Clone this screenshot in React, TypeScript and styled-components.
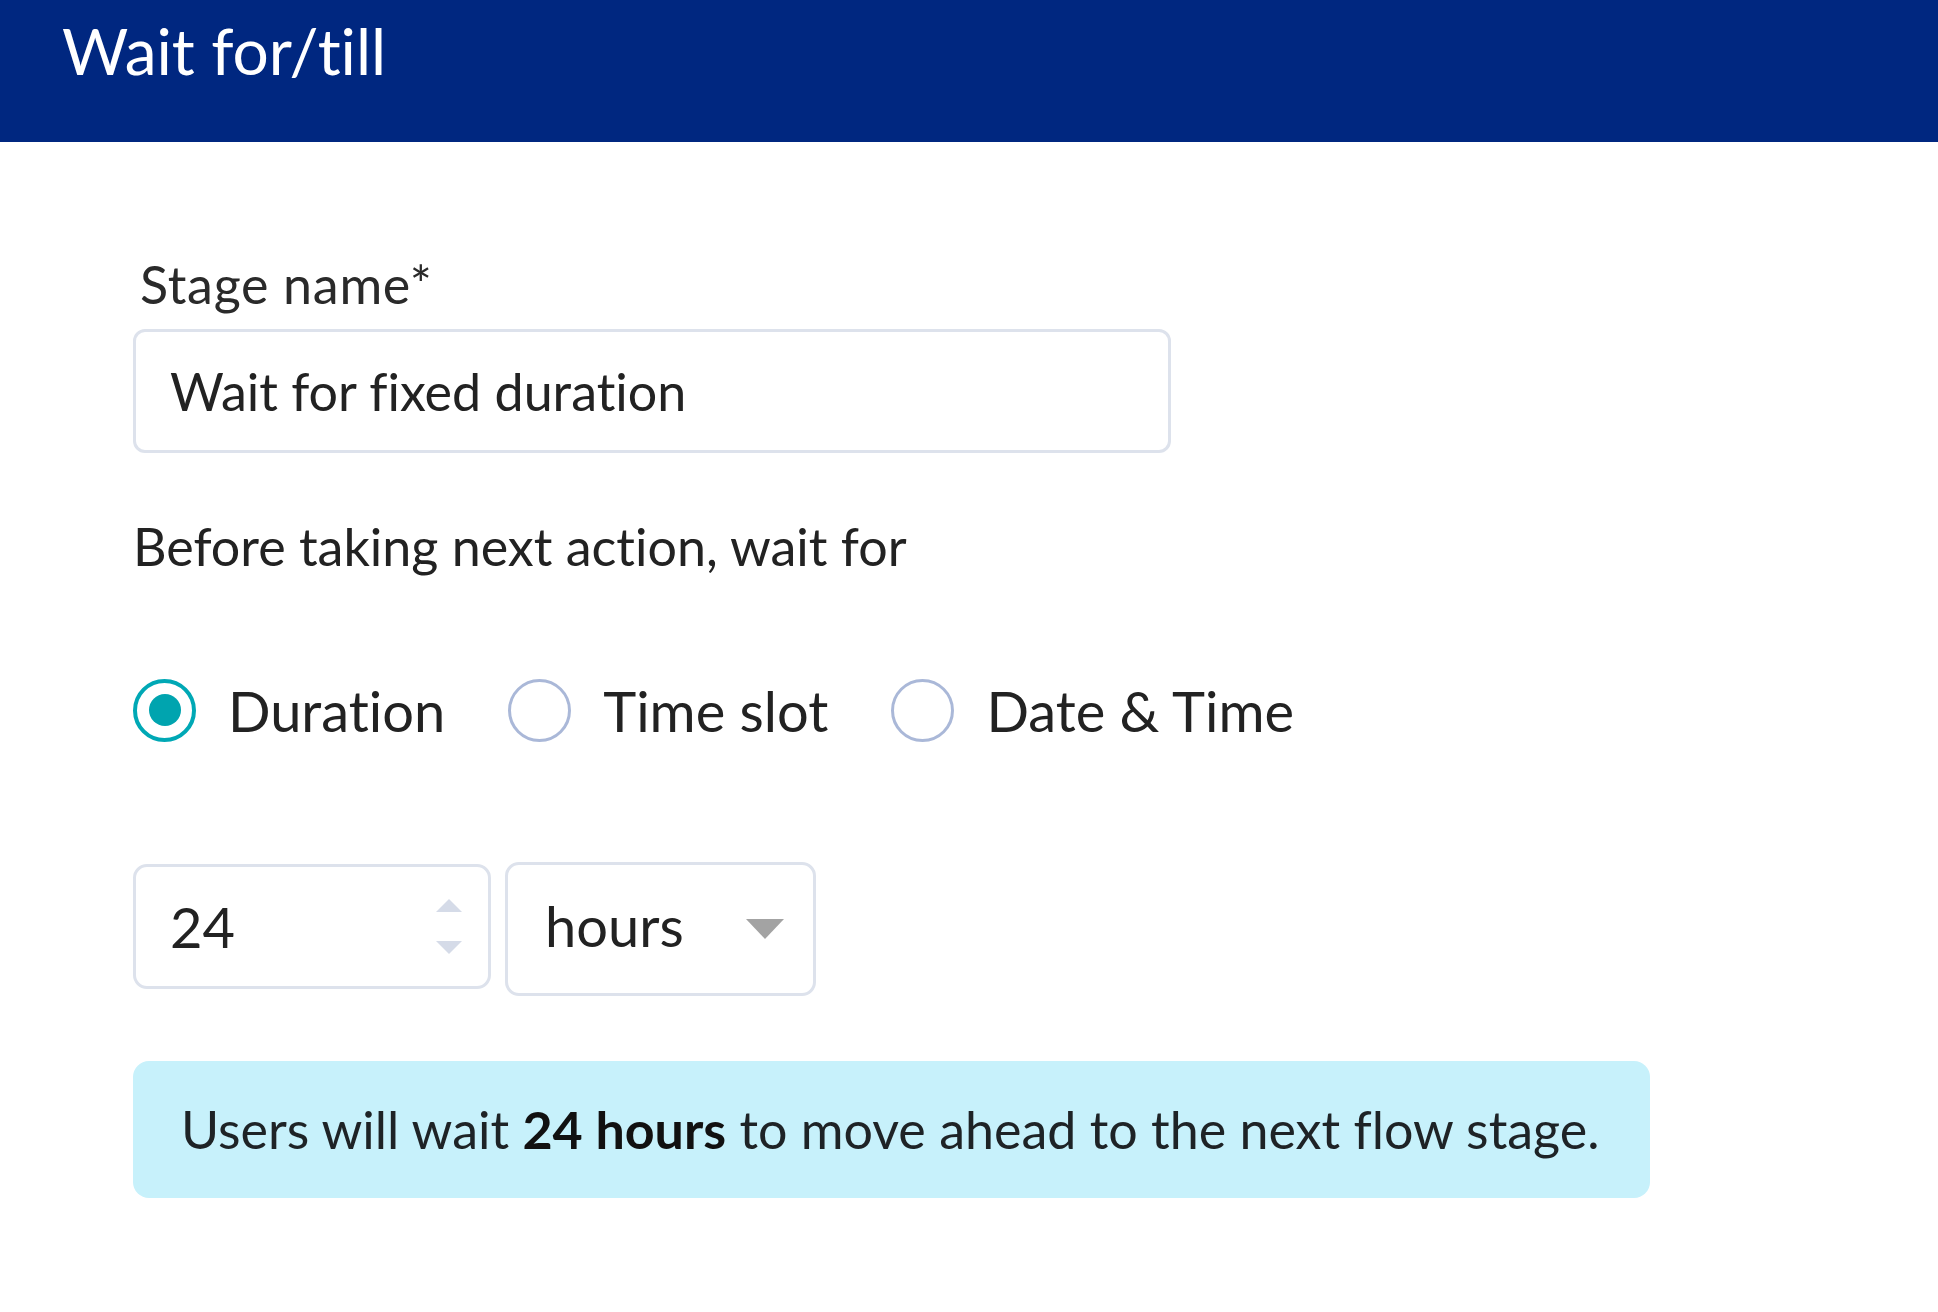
import React, { FC, useState } from "react";
import styled, { createGlobalStyle } from "styled-components";

const GlobalStyle = createGlobalStyle`
    html, body {
        margin: 0;
        padding: 0;
        background: #ffffff;
    }
    body {
        font-family: Lato, "Noto Sans", sans-serif;
        color: #222222;
    }
    body, input {
        font-variant-ligatures: none;
        font-feature-settings: "liga" 0, "clig" 0;
    }
`;

type RadioProps = { label: string; selected: boolean; onSelect: () => void };

const RadioOption: FC<RadioProps> = ({ label, selected, onSelect }) => (
    <StyledRadio onClick={onSelect}>
        <RadioCircle selected={selected}>{selected && <RadioDot />}</RadioCircle>
        <span>{label}</span>
    </StyledRadio>
);

const SpinnerArrows: FC = () => (
    <Spinner>
        <svg width="30" height="15" viewBox="0 0 30 15">
            <path d="M15 1 L28 14 L2 14 Z" fill="#d5dbe8" />
        </svg>
        <svg width="30" height="15" viewBox="0 0 30 15">
            <path d="M2 1 L28 1 L15 14 Z" fill="#d5dbe8" />
        </svg>
    </Spinner>
);

export default function App() {
    const [mode, setMode] = useState("duration");
    const [stageName, setStageName] = useState("Wait for fixed duration");
    const [amount, setAmount] = useState("24");

    return (
        <>
            <GlobalStyle />
            <Page>
                <Header>
                    <Title>Wait for/till</Title>
                </Header>
                <Body>
                    <FieldLabel>Stage name*</FieldLabel>
                    <TextInput value={stageName} onChange={(e) => setStageName(e.target.value)} />
                    <Hint>Before taking next action, wait for</Hint>
                    <RadioRow>
                        <RadioOption label="Duration" selected={mode === "duration"} onSelect={() => setMode("duration")} />
                        <RadioOption label="Time slot" selected={mode === "slot"} onSelect={() => setMode("slot")} />
                        <RadioOption label="Date & Time" selected={mode === "datetime"} onSelect={() => setMode("datetime")} />
                    </RadioRow>
                    <DurationRow>
                        <NumberBox>
                            <NumberInput value={amount} onChange={(e) => setAmount(e.target.value)} />
                            <SpinnerArrows />
                        </NumberBox>
                        <SelectBox>
                            <span>hours</span>
                            <svg width="40" height="22" viewBox="0 0 40 22">
                                <path d="M1 1 L39 1 L20 21 Z" fill="#a3a3a3" />
                            </svg>
                        </SelectBox>
                    </DurationRow>
                    <InfoBox>
                        Users will wait <b>{amount} hours</b> to move ahead to the next flow stage.
                    </InfoBox>
                </Body>
            </Page>
        </>
    );
}

const Page = styled.div`
    width: 100%;
    min-height: 1312px;
    display: flex;
    flex-direction: column;
`;

const Header = styled.div`
    height: 142px;
    box-sizing: border-box;
    background: #002780;
    padding: 13px 0 0 62px;
`;

const Title = styled.div`
    font-size: 64px;
    line-height: 1.2;
    color: #ffffff;
`;

const Body = styled.div`
    display: flex;
    flex-direction: column;
    align-items: flex-start;
    padding: 111px 0 0 133px;
`;

const FieldLabel = styled.div`
    font-size: 52px;
    line-height: 1.2;
    letter-spacing: 0.7px;
    color: #2a2a2a;
    padding-left: 7px;
`;

const TextInput = styled.input`
    margin-top: 14px;
    width: 1038px;
    height: 124px;
    box-sizing: border-box;
    border: 3px solid #dde2ec;
    border-radius: 12px;
    padding: 0 0 0 34px;
    font-family: Lato, "Noto Sans", sans-serif;
    font-size: 52px;
    color: #222222;
    outline: none;
`;

const Hint = styled.div`
    margin-top: 62px;
    font-size: 52px;
    line-height: 1.2;
    color: #222222;
`;

const RadioRow = styled.div`
    margin-top: 99px;
    display: flex;
    align-items: center;
    gap: 63px;
`;

const StyledRadio = styled.label`
    display: flex;
    align-items: center;
    gap: 32px;
    font-size: 56px;
    line-height: 1.2;
    color: #222222;
    cursor: pointer;
`;

const RadioCircle = styled.div<{ selected?: boolean }>`
    width: 63px;
    height: 63px;
    box-sizing: border-box;
    border-radius: 50%;
    border: ${(props) => (props.selected ? "4px solid #00a8b5" : "3px solid #aab8d8")};
    display: flex;
    align-items: center;
    justify-content: center;
    flex-shrink: 0;
`;

const RadioDot = styled.div`
    width: 32px;
    height: 32px;
    border-radius: 50%;
    background: #00a4af;
`;

const DurationRow = styled.div`
    margin-top: 118px;
    display: flex;
    align-items: flex-start;
    gap: 14px;
`;

const NumberBox = styled.div`
    margin-top: 2px;
    width: 358px;
    height: 125px;
    box-sizing: border-box;
    border: 3px solid #dde2ec;
    border-radius: 14px;
    display: flex;
    align-items: center;
    padding: 0 24px 0 34px;
`;

const NumberInput = styled.input`
    flex: 1;
    min-width: 0;
    border: none;
    outline: none;
    padding: 0;
    font-family: Lato, "Noto Sans", sans-serif;
    font-size: 56px;
    color: #222222;
    background: transparent;
`;

const Spinner = styled.div`
    display: flex;
    flex-direction: column;
    gap: 27px;
`;

const SelectBox = styled.div`
    width: 311px;
    height: 134px;
    box-sizing: border-box;
    border: 3px solid #dde2ec;
    border-radius: 14px;
    display: flex;
    align-items: center;
    justify-content: space-between;
    padding: 0 28px 6px 37px;
    font-size: 56px;
    color: #222222;

    svg {
        margin-top: 6px;
    }
`;

const InfoBox = styled.div`
    margin-top: 65px;
    width: 1517px;
    height: 137px;
    box-sizing: border-box;
    background: #c7f1fb;
    border-radius: 16px;
    display: flex;
    align-items: center;
    padding-left: 48px;
    font-size: 52px;
    color: #1e2326;
    white-space: pre;

    b {
        font-weight: 700;
        color: #111111;
    }
`;
